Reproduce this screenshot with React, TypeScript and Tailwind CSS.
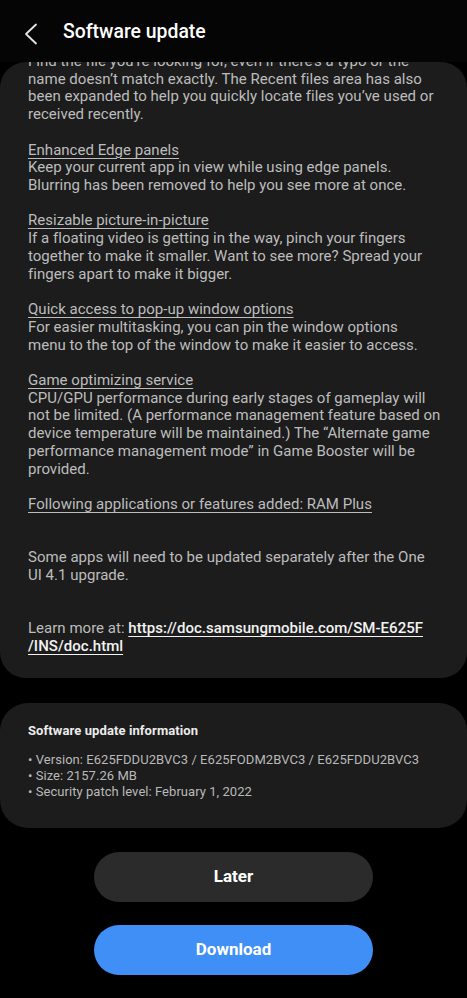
import React from "react";

const font = { fontFamily: '"Roboto", "Noto Sans", "Liberation Sans", sans-serif' };

const L = ({ children, u }: { children?: React.ReactNode; u?: boolean }) => (
  <div className={u ? "underline decoration-1 underline-offset-[3px] h-[17.73px] whitespace-nowrap" : "h-[17.73px] whitespace-nowrap"}>
    {children ?? "\u00a0"}
  </div>
);

export default function App() {
  return (
    <div className="w-[467px] h-[998px] bg-black flex flex-col overflow-hidden" style={font}>
      <div className="h-[62px] shrink-0 bg-[#050505] flex items-center z-10">
        <svg className="ml-[24px] mt-[6px]" width="14" height="22" viewBox="0 0 14 22" fill="none">
          <path d="M12 1.5 L2 11 L12 20.5" stroke="#e6e6e6" strokeWidth="1.8" strokeLinecap="round" strokeLinejoin="round" />
        </svg>
        <div className="ml-[25px] mt-[2px] text-[19.4px] text-white font-medium">Software update</div>
      </div>

      <div className="bg-[#1c1c1c] rounded-[26px] overflow-hidden h-[616px] shrink-0">
        <div className="mt-[-9px] pl-[28px] text-[15px] leading-[17.73px] text-[#bdbdbd] tracking-[0.02px]">
          <L>Find the file you’re looking for, even if there’s a typo or the</L>
          <L>name doesn’t match exactly. The Recent files area has also</L>
          <L>been expanded to help you quickly locate files you’ve used or</L>
          <L>received recently.</L>
          <L />
          <L u>Enhanced Edge panels</L>
          <L>Keep your current app in view while using edge panels.</L>
          <L>Blurring has been removed to help you see more at once.</L>
          <L />
          <L u>Resizable picture-in-picture</L>
          <L>If a floating video is getting in the way, pinch your fingers</L>
          <L>together to make it smaller. Want to see more? Spread your</L>
          <L>fingers apart to make it bigger.</L>
          <L />
          <L u>Quick access to pop-up window options</L>
          <L>For easier multitasking, you can pin the window options</L>
          <L>menu to the top of the window to make it easier to access.</L>
          <L />
          <L u>Game optimizing service</L>
          <L>CPU/GPU performance during early stages of gameplay will</L>
          <L>not be limited. (A performance management feature based on</L>
          <L>device temperature will be maintained.) The “Alternate game</L>
          <L>performance management mode” in Game Booster will be</L>
          <L>provided.</L>
          <L />
          <L u>Following applications or features added: RAM Plus</L>
          <L />
          <L />
          <L>Some apps will need to be updated separately after the One</L>
          <L>UI 4.1 upgrade.</L>
          <L />
          <L />
          <L>
            Learn more at:{" "}
            <span className="text-[#f2f2f2] font-medium underline decoration-1 underline-offset-[3px]">
              https://doc.samsungmobile.com/SM-E625F
            </span>
          </L>
          <L>
            <span className="text-[#f2f2f2] font-medium underline decoration-1 underline-offset-[3px]">/INS/doc.html</span>
          </L>
        </div>
      </div>

      <div className="mt-[25px] bg-[#1c1c1c] rounded-[28px] h-[125px] shrink-0 pl-[28px] pt-[19px]">
        <div className="text-[13px] leading-[18px] font-bold text-[#ececec] tracking-[0.1px]">Software update information</div>
        <div className="mt-[12px] text-[13px] leading-[16px] text-[#b9b9b9] tracking-[0.05px]">
          <div>• Version: E625FDDU2BVC3 / E625FODM2BVC3 / E625FDDU2BVC3</div>
          <div>• Size: 2157.26 MB</div>
          <div>• Security patch level: February 1, 2022</div>
        </div>
      </div>

      <div className="flex flex-col items-center mt-[24px] gap-[23px]">
        <button className="w-[279px] h-[50px] rounded-full bg-[#2b2b2b] text-white text-[17px] font-bold">Later</button>
        <button className="w-[279px] h-[50px] rounded-full bg-[#3f8ff7] text-white text-[17px] font-bold">Download</button>
      </div>
    </div>
  );
}
